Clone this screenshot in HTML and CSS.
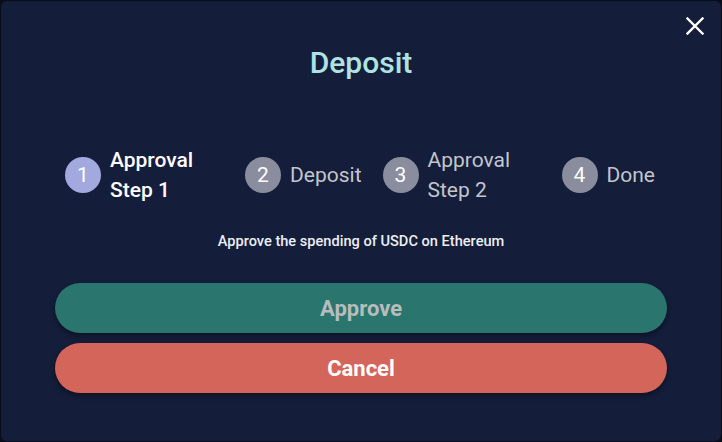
FILE: index.html
```html
<!DOCTYPE html>
<html lang="en">
<head>
<meta charset="utf-8">
<title>Deposit</title>
<link rel="stylesheet" href="styles.css">
</head>
<body>
<div class="modal">
  <button class="close" aria-label="Close">
    <svg viewBox="0 0 18 18" width="18" height="18"><path d="M1.5 1.5 L16.5 16.5 M16.5 1.5 L1.5 16.5" stroke="#fff" stroke-width="2.4" stroke-linecap="square" fill="none"/></svg>
  </button>
  <h1 class="title">Deposit</h1>
  <div class="stepper">
    <div class="step step-1 active">
      <span class="circle">1</span>
      <span class="label wrap">Approval Step 1</span>
    </div>
    <div class="step step-2">
      <span class="circle">2</span>
      <span class="label">Deposit</span>
    </div>
    <div class="step step-3">
      <span class="circle">3</span>
      <span class="label wrap">Approval Step 2</span>
    </div>
    <div class="step step-4">
      <span class="circle">4</span>
      <span class="label">Done</span>
    </div>
  </div>
  <p class="desc">Approve the spending of USDC on Ethereum</p>
  <div class="actions">
    <button class="btn btn-approve">Approve</button>
    <button class="btn btn-cancel">Cancel</button>
  </div>
</div>
</body>
</html>
```

FILE: styles.css
```css
* { box-sizing: border-box; }
html, body { margin: 0; padding: 0; }
body {
  background: #0a0d18;
  font-family: Roboto, "Liberation Sans", sans-serif;
  width: 722px;
  height: 442px;
  overflow: hidden;
  padding: 1px;
}
.modal {
  position: relative;
  width: 720px;
  height: 440px;
  background: #141d3a;
  border-radius: 6px;
  display: flex;
  flex-direction: column;
  align-items: center;
}
.close {
  position: absolute;
  top: 16px;
  right: 17px;
  width: 18px;
  height: 18px;
  padding: 0;
  background: none;
  border: 0;
  cursor: pointer;
}
.close svg { display: block; }
.title {
  margin: 43px 0 0;
  font-size: 30px;
  line-height: 38px;
  font-weight: 500;
  color: #aee3e2;
}
.stepper {
  align-self: stretch;
  display: flex;
  align-items: center;
  padding-left: 64px;
  margin-top: 61px;
  height: 64px;
}
.step {
  display: flex;
  align-items: center;
}
.step-1 { margin-right: 43px; }
.step-2 { margin-right: 21px; }
.step-3 { margin-right: 42px; }
.circle {
  width: 36px;
  height: 36px;
  border-radius: 50%;
  background: #8a8d9d;
  color: #fff;
  font-size: 21px;
  display: flex;
  align-items: center;
  justify-content: center;
  flex-shrink: 0;
}
.active .circle { background: #a2a9df; }
.label {
  margin-left: 9px;
  font-size: 21px;
  line-height: 30px;
  color: #c3c5cd;
}
.label.wrap { width: 92px; }
.active .label { color: #fff; font-weight: 500; }
.desc {
  margin: 24px 0 0;
  font-size: 14.6px;
  line-height: 20px;
  font-weight: 500;
  color: #eceef4;
}
.actions {
  margin-top: 32px;
  display: flex;
  flex-direction: column;
  gap: 10px;
  width: 612px;
}
.btn {
  height: 50px;
  border: 0;
  border-radius: 25px;
  font-family: Roboto, "Liberation Sans", sans-serif;
  font-size: 22px;
  font-weight: 700;
  box-shadow: 0 3px 5px rgba(0,0,0,0.35);
}
.btn-approve { background: #2a756e; color: #b7bdbd; }
.btn-cancel { background: #d4655a; color: #fff; }
```
